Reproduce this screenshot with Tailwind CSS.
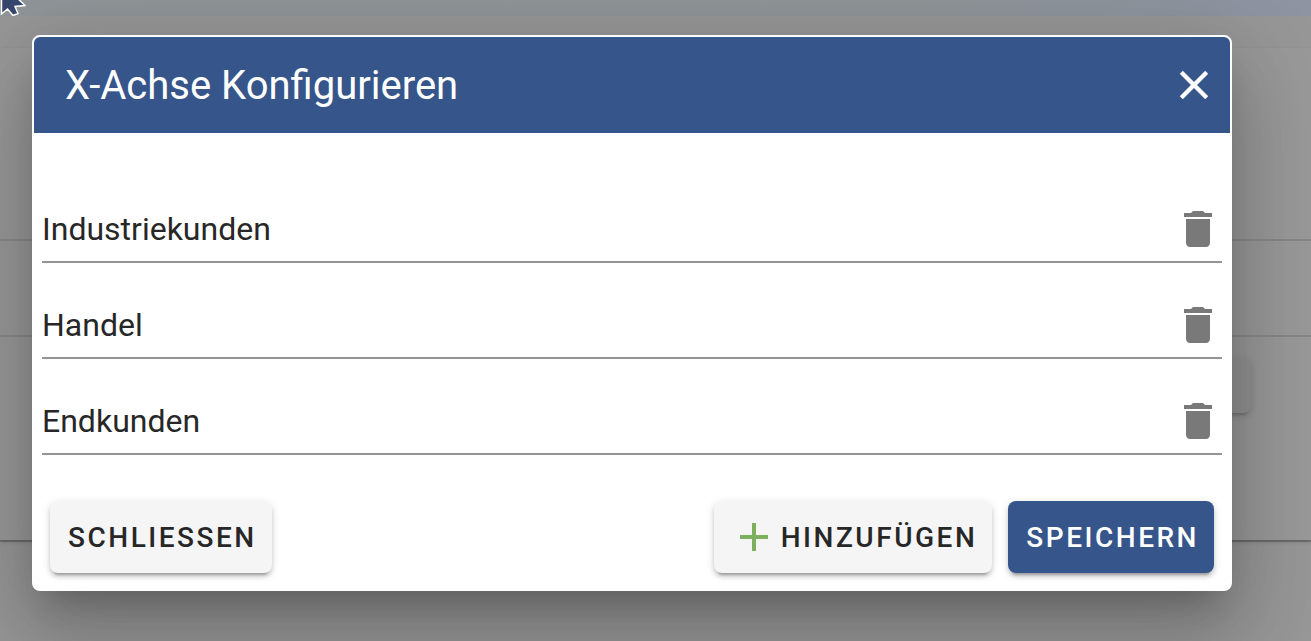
<!DOCTYPE html>
<html lang="de">
<head>
<meta charset="utf-8">
<meta name="viewport" content="width=device-width, initial-scale=1">
<title>X-Achse Konfigurieren</title>
<script src="https://cdn.jsdelivr.net/npm/@tailwindcss/browser@4"></script>
</head>
<body class="relative min-h-screen overflow-hidden bg-[#979797] font-['Roboto',sans-serif] text-[#272727]">

<!-- Dimmed page behind the dialog -->
<div class="absolute inset-0 flex flex-col" aria-hidden="true">
  <div class="h-4 bg-linear-to-r from-[#8f9598] from-70% to-[#8e94a2]"></div>
  <div class="h-8 bg-[#979797]"></div>
  <div class="bg-[#999999] shadow-[0_2px_0_rgba(0,0,0,0.2),0_2px_4px_rgba(0,0,0,0.16)]">
    <div class="h-[193px] border-b-2 border-[#878787]"></div>
    <div class="h-24 border-b-2 border-[#878787]"></div>
    <div class="flex h-[203px] justify-end pt-5 pr-15">
      <div class="h-14 w-40 rounded-lg bg-[#939393] shadow-[0_6px_2px_-4px_rgba(0,0,0,0.12),0_4px_4px_rgba(0,0,0,0.08),0_2px_10px_rgba(0,0,0,0.07)]"></div>
    </div>
  </div>
</div>

<main role="dialog" aria-modal="true" aria-labelledby="dialog-title" class="relative mt-[35px] mr-[79px] ml-8 rounded-lg border-2 border-white bg-white shadow-[0_22px_30px_-14px_rgba(0,0,0,0.2),0_48px_76px_6px_rgba(0,0,0,0.14),0_18px_92px_16px_rgba(0,0,0,0.12)]">
  <header class="flex h-24 items-center justify-between rounded-t-md bg-[#36568b] pr-3 pl-[31px] text-white">
    <h1 id="dialog-title" class="pt-0.5 text-[40px] leading-16 font-normal">X-Achse Konfigurieren</h1>
    <button type="button" aria-label="Dialog schließen" class="flex size-12 items-center justify-center">
      <svg class="size-12" viewBox="0 0 24 24" fill="currentColor" stroke="currentColor" stroke-width="0.2"><path d="M19 6.41L17.59 5L12 10.59L6.41 5L5 6.41L10.59 12L5 17.59L6.41 19L12 13.41L17.59 19L19 17.59L13.41 12L19 6.41Z"/></svg>
    </button>
  </header>

  <form>
    <div class="px-2 pt-[34px]">
      <div class="flex h-24 items-end border-b-2 border-[#949494]">
        <input type="text" aria-label="Eintrag 1" value="Industriekunden" class="h-16 min-w-0 flex-1 text-[32px] outline-none">
        <button type="button" aria-label="Industriekunden löschen" class="flex h-16 w-12 items-center justify-center text-[#797979]">
          <svg class="size-12" viewBox="0 0 24 24" fill="currentColor"><path d="M6 19C6 20.1 6.9 21 8 21H16C17.1 21 18 20.1 18 19V7H6V19M19 4H15.5L14.5 3H9.5L8.5 4H5V6H19V4Z"/></svg>
        </button>
      </div>
      <div class="flex h-24 items-end border-b-2 border-[#949494]">
        <input type="text" aria-label="Eintrag 2" value="Handel" class="h-16 min-w-0 flex-1 text-[32px] outline-none">
        <button type="button" aria-label="Handel löschen" class="flex h-16 w-12 items-center justify-center text-[#797979]">
          <svg class="size-12" viewBox="0 0 24 24" fill="currentColor"><path d="M6 19C6 20.1 6.9 21 8 21H16C17.1 21 18 20.1 18 19V7H6V19M19 4H15.5L14.5 3H9.5L8.5 4H5V6H19V4Z"/></svg>
        </button>
      </div>
      <div class="flex h-24 items-end border-b-2 border-[#949494]">
        <input type="text" aria-label="Eintrag 3" value="Endkunden" class="h-16 min-w-0 flex-1 text-[32px] outline-none">
        <button type="button" aria-label="Endkunden löschen" class="flex h-16 w-12 items-center justify-center text-[#797979]">
          <svg class="size-12" viewBox="0 0 24 24" fill="currentColor"><path d="M6 19C6 20.1 6.9 21 8 21H16C17.1 21 18 20.1 18 19V7H6V19M19 4H15.5L14.5 3H9.5L8.5 4H5V6H19V4Z"/></svg>
        </button>
      </div>
    </div>

    <div class="flex items-center gap-4 px-4 pt-[46px] pb-4">
      <button type="button" class="mr-auto flex h-18 items-center rounded-lg bg-[#f5f5f5] pr-[15px] pl-[18px] text-[28px] font-medium tracking-[0.09em] shadow-[0_6px_2px_-4px_rgba(0,0,0,0.2),0_4px_4px_rgba(0,0,0,0.14),0_2px_10px_rgba(0,0,0,0.12)]"><span class="pt-0.5">SCHLIESSEN</span></button>
      <button type="button" class="flex h-18 items-center gap-[3px] rounded-lg bg-[#f5f5f5] pr-[15px] pl-4 text-[28px] font-medium tracking-[0.09em] shadow-[0_6px_2px_-4px_rgba(0,0,0,0.2),0_4px_4px_rgba(0,0,0,0.14),0_2px_10px_rgba(0,0,0,0.12)]">
        <svg class="size-12 text-[#7cb05c]" viewBox="0 0 24 24" fill="currentColor"><path d="M19 13H13V19H11V13H5V11H11V5H13V11H19V13Z"/></svg>
        <span class="pt-0.5">HINZUFÜGEN</span>
      </button>
      <button type="submit" class="flex h-18 items-center rounded-lg bg-[#36568b] pr-[15px] pl-[18px] text-[28px] font-medium tracking-[0.09em] text-white shadow-[0_6px_2px_-4px_rgba(0,0,0,0.2),0_4px_4px_rgba(0,0,0,0.14),0_2px_10px_rgba(0,0,0,0.12)]"><span class="pt-0.5">SPEICHERN</span></button>
    </div>
  </form>
</main>

<!-- Mouse pointer -->
<svg class="absolute top-0 left-0 h-4 w-[26px]" viewBox="0 0 26 16" aria-hidden="true"><path d="M1.500 -8V14L7.500 9L13 15.500L18 13.500L15 6.500L25 5.500L11 -8Z" fill="#36456b" stroke="#fff" stroke-width="1.500"/></svg>
</body>
</html>
